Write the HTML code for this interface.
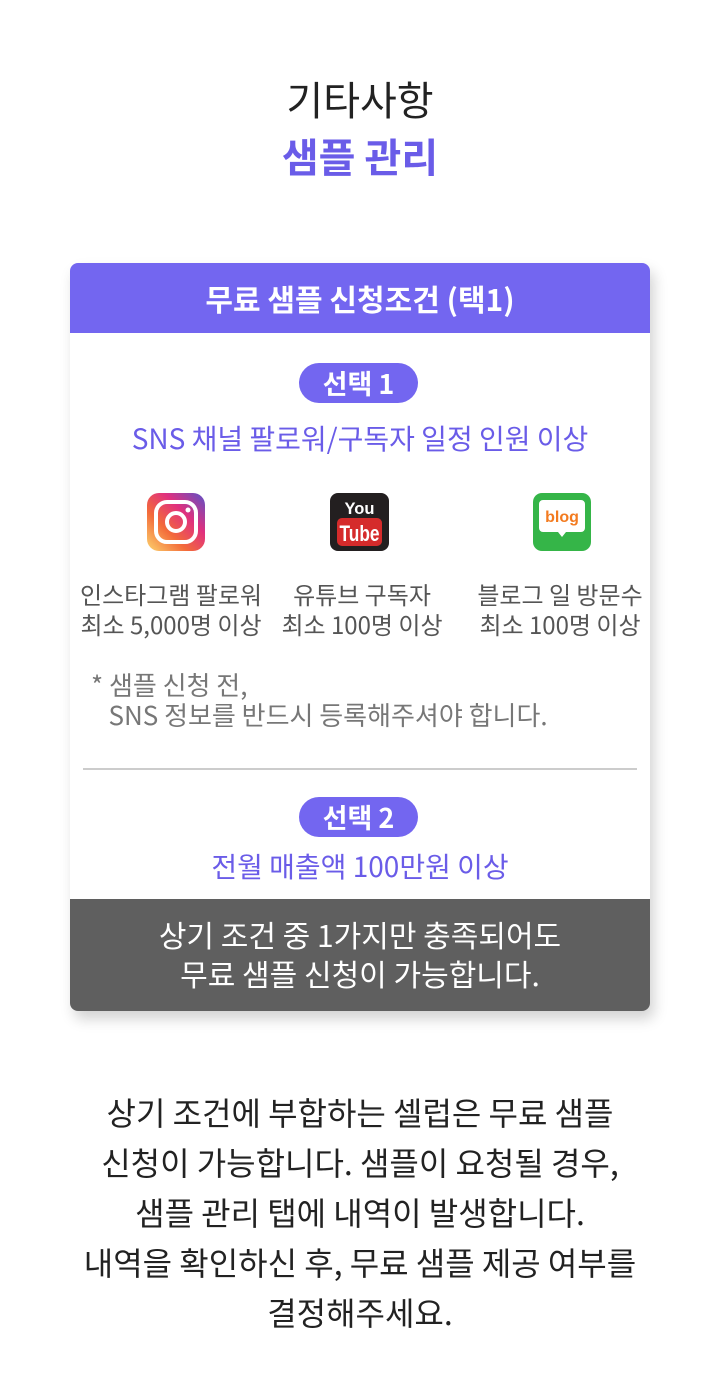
<!DOCTYPE html>
<html><head><meta charset="utf-8"><style>
*{margin:0;padding:0;box-sizing:border-box}
body{width:720px;height:1394px;background:#fff;font-family:"Noto Sans CJK KR","Liberation Sans",sans-serif;position:relative;overflow:hidden}
.a{position:absolute;left:0;right:0;text-align:center;white-space:nowrap}
.card{position:absolute;left:70px;top:263px;width:580px;height:748px;background:#fff;border-radius:8px;box-shadow:4px 8px 14px rgba(0,0,0,0.18);overflow:hidden}
.hd{position:absolute;left:0;top:0;width:580px;height:70px;background:#7366f0;color:#fff;font-weight:bold;font-size:30px;line-height:70px;text-align:center;white-space:nowrap}
.pill{position:absolute;left:229px;width:119px;height:40px;border-radius:20px;background:#7366f0;color:#fff;font-weight:bold;font-size:27px;line-height:40px;text-align:center}
.pt{position:absolute;left:0;right:0;text-align:center;color:#6a5ce8;font-size:28px;line-height:36px;white-space:nowrap}
.lb{position:absolute;width:200px;text-align:center;color:#555;font-size:24px;line-height:30px;white-space:nowrap}
.ft{position:absolute;left:0;top:636px;width:580px;height:112px;background:#5f5f5f;color:#fff;font-size:30px;line-height:39px;text-align:center;padding-top:16px;white-space:nowrap}
</style></head><body>
<div class="a" style="top:75px;font-size:40px;line-height:46px;color:#222">기타사항</div>
<div class="a" style="top:132px;font-size:40px;line-height:46px;color:#6a5ce8;font-weight:bold">샘플 관리</div>
<div class="card">
<div class="hd">무료 샘플 신청조건 (택1)</div>
<div class="pill" style="top:100px">선택 1</div>
<div class="pt" style="top:157px">SNS 채널 팔로워/구독자 일정 인원 이상</div>
<svg style="position:absolute;left:77px;top:230px" width="58" height="58" viewBox="0 0 58 58">
<defs><linearGradient id="ig" x1="0" y1="1" x2="1" y2="0"><stop offset="0" stop-color="#fcd46e"/><stop offset="0.35" stop-color="#f36a3a"/><stop offset="0.65" stop-color="#e0307e"/><stop offset="1" stop-color="#5a52c8"/></linearGradient></defs>
<rect width="58" height="58" rx="12" fill="url(#ig)"/>
<rect x="9" y="9" width="40" height="40" rx="11" fill="none" stroke="#fff" stroke-width="4"/>
<circle cx="29" cy="29" r="9" fill="none" stroke="#fff" stroke-width="4"/>
<circle cx="41" cy="17" r="2.5" fill="#fff"/></svg>
<svg style="position:absolute;left:260px;top:230px" width="59" height="58" viewBox="0 0 59 58">
<rect width="59" height="58" rx="8" fill="#231f20"/>
<text x="29.5" y="21" text-anchor="middle" fill="#fff" font-family="Liberation Sans" font-weight="bold" font-size="17" textLength="30" lengthAdjust="spacingAndGlyphs">You</text>
<rect x="7" y="25" width="45" height="28" rx="5" fill="#d52b2b"/>
<text x="29.5" y="48" text-anchor="middle" fill="#fff" font-family="Liberation Sans" font-weight="bold" font-size="22" textLength="40" lengthAdjust="spacingAndGlyphs">Tube</text></svg>
<svg style="position:absolute;left:463px;top:230px" width="58" height="58" viewBox="0 0 58 58">
<rect width="58" height="58" rx="9" fill="#35b548"/>
<path d="M10 7h38a4 4 0 0 1 4 4v24a4 4 0 0 1-4 4H33l-4 5-4-5H10a4 4 0 0 1-4-4V11a4 4 0 0 1 4-4z" fill="#fff"/>
<text x="29" y="29" text-anchor="middle" fill="#f37b20" font-family="Liberation Sans" font-weight="bold" font-size="16">blog</text></svg>
<div class="lb" style="left:1px;top:316px">인스타그램 팔로워<br>최소 5,000명 이상</div>
<div class="lb" style="left:192px;top:316px">유튜브 구독자<br>최소 100명 이상</div>
<div class="lb" style="left:390px;top:316px">블로그 일 방문수<br>최소 100명 이상</div>
<div style="position:absolute;left:21px;top:407px;color:#777;font-size:26px;line-height:30px;white-space:nowrap">* 샘플 신청 전,<br>&nbsp;&nbsp;&nbsp;SNS 정보를 반드시 등록해주셔야 합니다.</div>
<div style="position:absolute;left:13px;top:505px;width:554px;height:2px;background:#ccc"></div>
<div class="pill" style="top:534px">선택 2</div>
<div class="pt" style="top:585px">전월 매출액 100만원 이상</div>
<div class="ft">상기 조건 중 1가지만 충족되어도<br>무료 샘플 신청이 가능합니다.</div>
</div>
<div class="a" style="top:1087px;font-size:32px;line-height:50px;color:#222">상기 조건에 부합하는 셀럽은 무료 샘플<br>신청이 가능합니다. 샘플이 요청될 경우,<br>샘플 관리 탭에 내역이 발생합니다.<br>내역을 확인하신 후, 무료 샘플 제공 여부를<br>결정해주세요.</div>
</body></html>
